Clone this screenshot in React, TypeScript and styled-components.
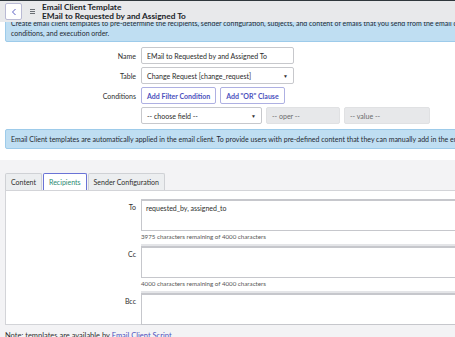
import React, { FunctionComponent } from "react";
import styled, { createGlobalStyle } from "styled-components";

const GlobalStyle = createGlobalStyle`
  html, body {
    margin: 0;
    padding: 0;
    background: #ffffff;
    overflow: hidden;
  }
  body {
    font-family: Lato, "Open Sans", sans-serif;
    color: #2e2e2e;
  }
`

const Page = styled.div`
  width: 640px;
  height: 337px;
  overflow: hidden;
`

const Header = styled.div`
  position: relative;
  z-index: 2;
  height: 22px;
  background: #e8e9eb;
  border-top: 1px solid #2f373c;
  box-sizing: border-box;
  display: flex;
  align-items: center;
  padding-left: 5px;
`
const BackButton = styled.div`
  width: 17px;
  height: 17px;
  box-sizing: border-box;
  border: 1px solid #b9bad4;
  border-radius: 2px;
  background: #fff;
  display: flex;
  align-items: center;
  justify-content: center;
`
const Hamburger = styled.div`
  margin-left: 8px;
  width: 5px;
  display: flex;
  flex-direction: column;
  gap: 1px;
  span {
    display: block;
    height: 1px;
    background: #6b6f74;
  }
`
const TitleBlock = styled.div`
  margin-left: 7px;
  display: flex;
  flex-direction: column;
  font-size: 8.3px;
  font-weight: 700;
  line-height: 9px;
  color: #202428;
  margin-top: 1px;
`

const Banner = styled.div<{ $top?: boolean }>`
  margin: ${(p) => (p.$top ? "-6px 0 0 5px" : "0 0 0 5px")};
  background: #bfdef2;
  border: 1px solid #9dcbea;
  border-radius: 2px;
  padding: ${(p) => (p.$top ? "1px 5px 3px" : "4px 5px")};
  font-size: 7px;
  line-height: 10px;
  color: #1f2a33;
  white-space: nowrap;
`

const Form = styled.div`
  padding: 5px 0 0 0;
  display: grid;
  grid-template-columns: 136px auto;
  column-gap: 5px;
  row-gap: 3px;
  align-items: center;
  margin-bottom: 5px;
`
const Label = styled.div`
  text-align: right;
  font-size: 7px;
  color: #2e2e2e;
`
const Input = styled.div<{ $w: number }>`
  width: ${(p) => p.$w}px;
  height: 17px;
  box-sizing: border-box;
  border: 1px solid #c7c8cc;
  border-radius: 2px;
  background: #fff;
  font-size: 7px;
  padding: 0 5px;
  display: flex;
  align-items: center;
  justify-content: space-between;
  color: #2a2a2a;
`
const Disabled = styled(Input)`
  background: #e7e8ea;
  border-color: #e0e1e3;
  color: #6a6a6a;
`
const Caret = styled.span`
  font-size: 5px;
  color: #333;
`
const Row = styled.div`
  display: flex;
  gap: 4px;
`
const Button = styled.div`
  height: 17px;
  box-sizing: border-box;
  border: 1px solid #aeb0e2;
  border-radius: 2px;
  background: #fff;
  color: #4c50bd;
  font-weight: 700;
  font-size: 7px;
  padding: 0 5px;
  display: flex;
  align-items: center;
`

const Section = styled.div`
  margin-top: 11px;
  background: #f3f3f5;
  padding: 13px 0 0 5px;
  height: 200px;
`
const Tabs = styled.div`
  display: flex;
  gap: 1px;
`
const Tab = styled.div<{ $active?: boolean }>`
  height: 17px;
  box-sizing: border-box;
  padding: 0 5px;
  font-size: 7px;
  display: flex;
  align-items: center;
  background: ${(p) => (p.$active ? "#fff" : "#eceef0")};
  border: ${(p) => (p.$active ? "1px solid #6a73d6" : "1px solid #cfd1d5")};
  border-bottom: none;
  color: ${(p) => (p.$active ? "#2b8a71" : "#2e2e2e")};
  border-radius: 2px 2px 0 0;
`
const Panel = styled.div`
  background: #fff;
  border: 1px solid #d3d4d8;
  border-right: none;
  height: 135px;
  box-sizing: border-box;
  padding-top: 8px;
`
const FieldRow = styled.div`
  display: grid;
  grid-template-columns: 130px 1fr;
  column-gap: 5px;
`
const FieldLabel = styled.div`
  text-align: right;
  font-size: 7px;
  padding-top: 4px;
`
const TextArea = styled.div`
  height: 32px;
  box-sizing: border-box;
  border: 1px solid #c6c7cc;
  border-top-width: 2px;
  border-right: none;
  background: #fff;
  font-size: 7px;
  padding: 3px 4px;
`
const Helper = styled.div`
  font-size: 6.2px;
  color: #555;
  height: 15px;
  line-height: 12px;
  border-bottom: 2px solid #e4e5e8;
  box-sizing: border-box;
`
const Note = styled.div`
  padding-top: 6px;
  font-size: 7.5px;
  color: #2e2e2e;
  a {
    color: #4c50bd;
  }
`

const App: FunctionComponent = () => {
  return (
    <Page>
      <GlobalStyle />
      <Header>
        <BackButton>
          <svg width="6" height="8" viewBox="0 0 6 8">
            <path d="M4.5 1 L1.5 4 L4.5 7" fill="none" stroke="#5a5fc4" strokeWidth="1" />
          </svg>
        </BackButton>
        <Hamburger>
          <span />
          <span />
          <span />
        </Hamburger>
        <TitleBlock>
          <span>Email Client Template</span>
          <span>EMail to Requested by and Assigned To</span>
        </TitleBlock>
      </Header>
      <Banner $top>
        Create email client templates to pre-determine the recipients, sender configuration, subjects, and content of emails that you send from the email client based on
        <br />
        conditions, and execution order.
      </Banner>
      <Form>
        <Label>Name</Label>
        <Input $w={153}>EMail to Requested by and Assigned To</Input>
        <Label>Table</Label>
        <Input $w={153}>
          Change Request [change_request]<Caret>▼</Caret>
        </Input>
        <Label>Conditions</Label>
        <Row>
          <Button>Add Filter Condition</Button>
          <Button>Add "OR" Clause</Button>
        </Row>
        <div />
        <Row>
          <Input $w={121}>
            -- choose field --<Caret>▼</Caret>
          </Input>
          <Disabled $w={74}>-- oper --</Disabled>
          <Disabled $w={86}>-- value --</Disabled>
        </Row>
      </Form>
      <Banner>
        Email Client templates are automatically applied in the email client. To provide users with pre-defined content that they can manually add in the email client, use quick messages.
      </Banner>
      <Section>
        <Tabs>
          <Tab>Content</Tab>
          <Tab $active>Recipients</Tab>
          <Tab>Sender Configuration</Tab>
        </Tabs>
        <Panel>
          <FieldRow>
            <FieldLabel>To</FieldLabel>
            <div>
              <TextArea>requested_by, assigned_to</TextArea>
              <Helper>3975 characters remaining of 4000 characters</Helper>
            </div>
            <FieldLabel>Cc</FieldLabel>
            <div>
              <TextArea />
              <Helper>4000 characters remaining of 4000 characters</Helper>
            </div>
            <FieldLabel>Bcc</FieldLabel>
            <div>
              <TextArea />
            </div>
          </FieldRow>
        </Panel>
        <Note>
          Note: templates are available by <a>Email Client Script</a>
        </Note>
      </Section>
    </Page>
  );
};

export default App;
